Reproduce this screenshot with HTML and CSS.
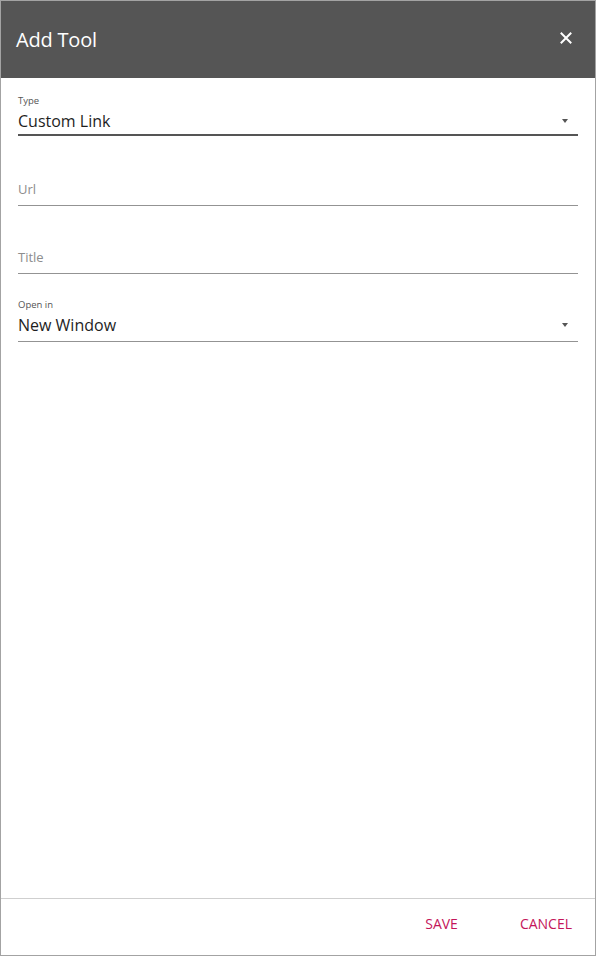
FILE: index.html
```html
<!DOCTYPE html>
<html>
<head>
<meta charset="utf-8">
<link rel="stylesheet" href="styles.css">
</head>
<body>
<div class="dialog">
  <header class="dialog-header">
    <h1 class="dialog-title">Add Tool</h1>
    <button class="close-btn" aria-label="Close">
      <svg width="12" height="12" viewBox="0 0 12 12"><path d="M1.5 1.5 L10.5 10.5 M10.5 1.5 L1.5 10.5" stroke="#fff" stroke-width="2" stroke-linecap="square"/></svg>
    </button>
  </header>
  <main class="dialog-body">
    <div class="field field-first field-focused">
      <label class="field-label">Type</label>
      <div class="field-row">
        <span class="field-value">Custom Link</span>
        <span class="caret"></span>
      </div>
    </div>
    <div class="field field-second">
      <div class="field-row">
        <span class="placeholder">Url</span>
      </div>
    </div>
    <div class="field">
      <div class="field-row">
        <span class="placeholder">Title</span>
      </div>
    </div>
    <div class="field">
      <label class="field-label">Open in</label>
      <div class="field-row">
        <span class="field-value">New Window</span>
        <span class="caret"></span>
      </div>
    </div>
  </main>
  <footer class="dialog-footer">
    <button class="text-btn">SAVE</button>
    <button class="text-btn">CANCEL</button>
  </footer>
</div>
</body>
</html>
```
FILE: styles.css
```css
html, body {
  margin: 0;
  padding: 0;
  background: #fff;
}
body {
  font-family: "Open Sans", "Noto Sans", sans-serif;
}
.dialog {
  width: 596px;
  height: 956px;
  box-sizing: border-box;
  border: 1px solid #a3a3a3;
  display: flex;
  flex-direction: column;
  background: #fff;
}
.dialog-header {
  height: 77px;
  background: #555555;
  display: flex;
  align-items: center;
  justify-content: space-between;
  padding: 0 23px 4px 15px;
  box-sizing: border-box;
  flex-shrink: 0;
}
.dialog-title {
  margin: 4px 0 0 0;
  font-size: 20px;
  font-weight: 400;
  color: #fff;
  letter-spacing: -0.2px;
}
.close-btn {
  background: none;
  border: 0;
  padding: 0;
  width: 12px;
  height: 12px;
  display: flex;
  cursor: pointer;
}
.dialog-body {
  flex: 1;
  padding: 0 17px;
  display: flex;
  flex-direction: column;
}
.field {
  height: 68px;
  box-sizing: border-box;
  display: flex;
  flex-direction: column;
  justify-content: flex-end;
  border-bottom: 1px solid #939393;
}
.field-first {
  height: 58px;
}
.field-second {
  margin-top: 2px;
}
.field-focused {
  border-bottom: 2px solid #555;
}
.field-label {
  font-size: 9.5px;
  color: #555;
  line-height: 12px;
}
.field-row {
  height: 28px;
  padding-bottom: 2px;
  display: flex;
  align-items: center;
  justify-content: space-between;
}
.field-first .field-row {
  padding-bottom: 0;
  margin-bottom: -1px;
}
.field-value {
  font-size: 16px;
  color: #1e1e1e;
}
.placeholder {
  font-size: 13px;
  color: #8d8d8d;
}
.caret {
  width: 0;
  height: 0;
  border-left: 3.5px solid transparent;
  border-right: 3.5px solid transparent;
  border-top: 4px solid #555;
  margin-right: 10px;
}
.dialog-footer {
  height: 57px;
  flex-shrink: 0;
  border-top: 1px solid #cfcfcf;
  box-sizing: border-box;
  display: flex;
  justify-content: flex-end;
  align-items: center;
  gap: 30px;
  padding: 0 7px 7px 0;
}
.text-btn {
  background: none;
  border: 0;
  padding: 0 16px;
  font-family: "Open Sans", "Noto Sans", sans-serif;
  font-size: 14px;
  color: #c4155a;
  cursor: pointer;
}
```
